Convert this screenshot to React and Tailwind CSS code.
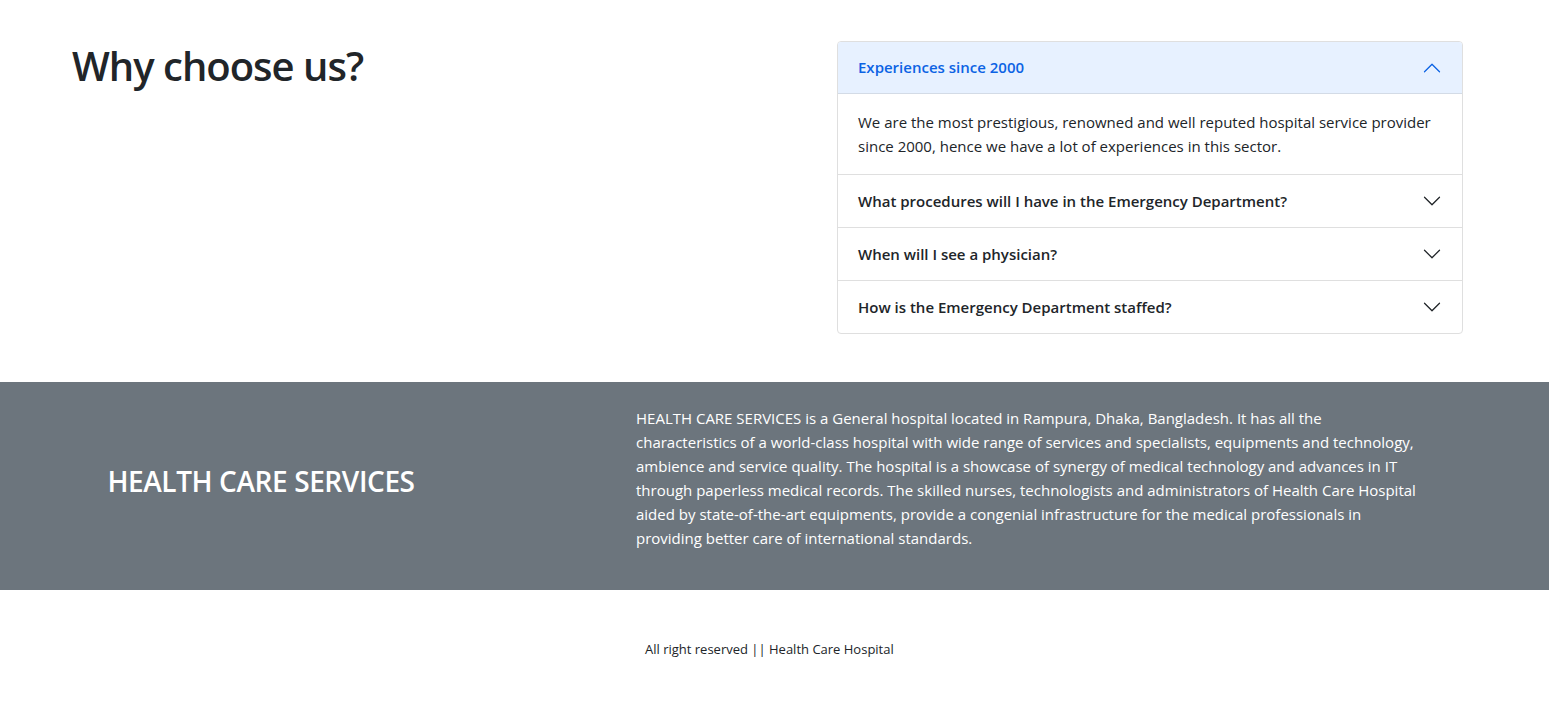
import React from "react";

const Chevron = ({ active }) => (
  <svg
    width="20"
    height="20"
    viewBox="0 0 16 16"
    className={active ? "rotate-180 shrink-0" : "shrink-0"}
    fill={active ? "#0c63e4" : "#212529"}
  >
    <path
      fillRule="evenodd"
      d="M1.646 4.646a.5.5 0 0 1 .708 0L8 10.293l5.646-5.647a.5.5 0 0 1 .708.708l-6 6a.5.5 0 0 1-.708 0l-6-6a.5.5 0 0 1 0-.708z"
    />
  </svg>
);

const items = [
  "What procedures will I have in the Emergency Department?",
  "When will I see a physician?",
  "How is the Emergency Department staffed?",
];

export default function App() {
  return (
    <div
      className="min-h-[701px] bg-white text-[#212529]"
      style={{ fontFamily: '"Open Sans", "Noto Sans", sans-serif' }}
    >
      <section className="flex pt-[41px] pb-[48px] pl-[72px]">
        <div className="w-[765px]">
          <h2 className="text-[40px] leading-[1.2] font-semibold tracking-[-1px] pt-[1px]">Why choose us?</h2>
        </div>
        <div className="w-[626px] border border-[#dfdfdf] rounded-[4px] overflow-hidden">
          <div className="h-[52px] flex items-center justify-between px-5 bg-[#e7f1ff] text-[#0c63e4] border-b border-[#d3dbe6] text-[15px] font-semibold">
            <span>Experiences since 2000</span>
            <Chevron active />
          </div>
          <div className="h-[80px] px-5 py-4 text-[15px] leading-[24px]">
            We are the most prestigious, renowned and well reputed hospital service provider since 2000, hence we have a lot of experiences in this sector.
          </div>
          {items.map((t) => (
            <div
              key={t}
              className="h-[53px] border-t border-[#dfdfdf] flex items-center justify-between px-5 text-[15px] font-semibold"
            >
              <span>{t}</span>
              <Chevron />
            </div>
          ))}
        </div>
      </section>

      <section className="bg-[#6c757d] text-white flex items-center h-[208px]">
        <div className="w-[522px] text-center">
          <h3 className="text-[28px] leading-[1.2] font-semibold tracking-[-0.4px] mb-2">HEALTH CARE SERVICES</h3>
        </div>
        <div className="pl-[114px] pt-[24px] pb-[40px] self-stretch">
          <p className="w-[790px] text-[15px] leading-[24px]">
            HEALTH CARE SERVICES is a General hospital located in Rampura, Dhaka, Bangladesh. It has all the characteristics of a world-class hospital with wide range of services and specialists, equipments and technology, ambience and service quality. The hospital is a showcase of synergy of medical technology and advances in IT through paperless medical records. The skilled nurses, technologists and administrators of Health Care Hospital aided by state-of-the-art equipments, provide a congenial infrastructure for the medical professionals in providing better care of international standards.
          </p>
        </div>
      </section>

      <footer className="pt-[49px] pl-[645px]">
        <p className="text-[13px] leading-[20px]">All right reserved || Health Care Hospital</p>
      </footer>
    </div>
  );
}
